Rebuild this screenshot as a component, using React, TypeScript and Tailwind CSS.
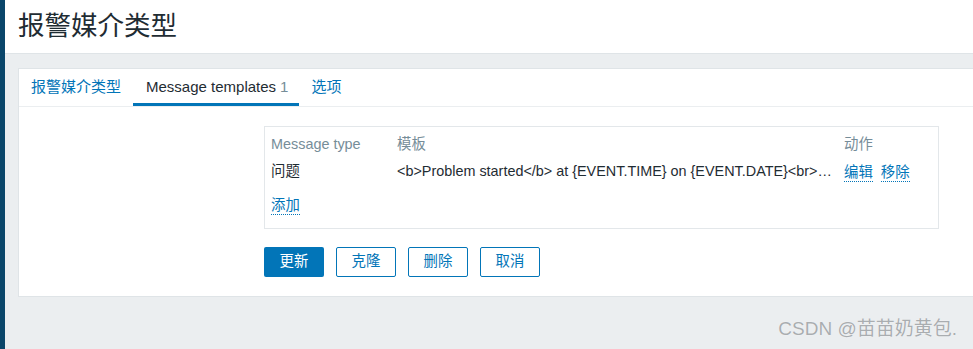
import React from "react";

const font = { fontFamily: '"Liberation Sans", Arial, "Noto Sans CJK SC", sans-serif' };

const tabs = [
  { label: "报警媒介类型", active: false },
  { label: "Message templates", count: 1, active: true },
  { label: "选项", active: false },
];

const buttons = ["克隆", "删除", "取消"];

export default function App() {
  return (
    <div className="relative flex h-[349px] w-[973px] overflow-hidden bg-[#ebeef0] text-[#1f2c33]" style={font}>
      <div className="w-[5px] shrink-0 bg-[#0a466a]" />
      <div className="flex min-w-0 flex-1 flex-col">
        <header className="flex h-[54px] shrink-0 items-center border-b border-[#dfe4e7] bg-white pl-[13px]">
          <h1 className="text-[26.5px] leading-none text-[#1f2c33]">报警媒介类型</h1>
        </header>

        <main className="pl-[13px] pt-[14px]">
          <div className="w-[1000px] border border-r-0 border-[#dfe4e7] bg-white">
            <nav className="flex h-[38px] border-b border-[#ebeef0] text-[15px]">
              {tabs.map((tab) => (
                <div
                  key={tab.label}
                  className={
                    tab.active
                      ? "flex items-center border-b-[3px] border-[#0275b8] pl-[13px] pr-[11px] pt-[3px] text-[#1f2c33]"
                      : "flex items-center px-[12px] text-[#0275b8]"
                  }
                >
                  {tab.label}
                  {tab.count ? <span className="ml-[4px] text-[#768d99]">{tab.count}</span> : null}
                </div>
              ))}
            </nav>

            <div className="pb-[19px] pl-[245px] pt-[19px] text-[14.4px]">
              <div className="h-[103px] w-[675px] border border-[#e3e7ea] px-[6px] pt-[8px]">
                <div className="flex h-[20px] items-center text-[#768d99]">
                  <div className="w-[126px]">Message type</div>
                  <div className="w-[447px]">模板</div>
                  <div>动作</div>
                </div>
                <div className="mt-[7px] flex h-[20px] items-center">
                  <div className="w-[126px]">问题</div>
                  <div className="w-[447px] pr-[6px]">
                    <div className="truncate">
                      {"<b>Problem started</b> at {EVENT.TIME} on {EVENT.DATE}<br>Problem name: {EVENT.NAME}"}
                    </div>
                  </div>
                  <div className="flex gap-[8px] text-[#0275b8]">
                    <span className="border-b border-dotted border-[#0275b8] leading-[18px]">编辑</span>
                    <span className="border-b border-dotted border-[#0275b8] leading-[18px]">移除</span>
                  </div>
                </div>
                <div className="mt-[14px] flex">
                  <span className="border-b border-dotted border-[#0275b8] leading-[18px] text-[#0275b8]">添加</span>
                </div>
              </div>

              <div className="mt-[18px] flex gap-[12px]">
                <button className="h-[30px] w-[60px] rounded-[2px] bg-[#0275b8] text-[14.4px] text-white">更新</button>
                {buttons.map((b) => (
                  <button
                    key={b}
                    className="h-[30px] w-[60px] rounded-[2px] border border-[#0275b8] bg-white text-[14.4px] text-[#0275b8]"
                  >
                    {b}
                  </button>
                ))}
              </div>
            </div>
          </div>
        </main>
      </div>

      <div className="absolute bottom-[6px] right-[16px] text-[19px] text-[#a9adb0] [text-shadow:0_0_1px_#fff]">
        CSDN @苗苗奶黄包.
      </div>
    </div>
  );
}
